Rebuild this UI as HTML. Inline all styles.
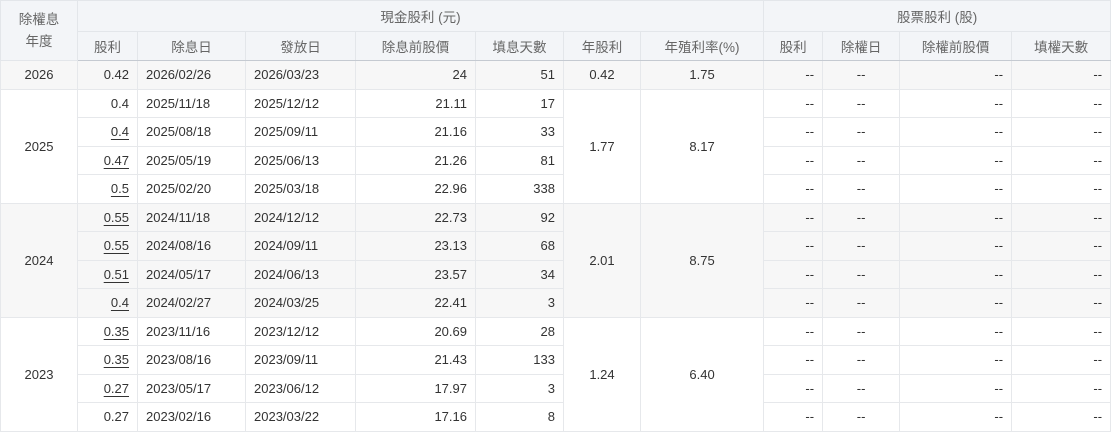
<!DOCTYPE html><html><head><meta charset="utf-8"><style>
body{margin:0;background:#fff;font-family:"Liberation Sans","Noto Sans CJK TC",sans-serif;font-size:13px;color:#333}
table{border-collapse:collapse;table-layout:fixed;width:1110px}
th{background:#f3f5f8;color:#666;font-weight:normal;border:1px solid #e3e6ea;text-align:center;font-size:13.5px;padding:0}
tr.h1 th{height:30px}
tr.h2 th{height:28px;border-bottom:1px solid #c5cad1}
td{border:1px solid #e6e8eb;height:27.5px;padding:0 8px;white-space:nowrap;box-sizing:border-box}
tr.d{height:28.5px}
.r{text-align:right}.l{text-align:left}.c{text-align:center}
.g td{background:#f7f7f7}
u{text-decoration:underline;text-underline-offset:3px}
</style></head><body>
<table>
<colgroup><col style="width:77px"><col style="width:60px"><col style="width:108px"><col style="width:110px"><col style="width:120px"><col style="width:88px"><col style="width:77px"><col style="width:123px"><col style="width:59px"><col style="width:77px"><col style="width:112px"><col style="width:99px"></colgroup>
<tr class="h1"><th rowspan="2" class="c" style="line-height:22px">除權息<br>年度</th><th colspan="7">現金股利 (元)</th><th colspan="4">股票股利 (股)</th></tr>
<tr class="h2"><th>股利</th><th>除息日</th><th>發放日</th><th>除息前股價</th><th>填息天數</th><th>年股利</th><th>年殖利率(%)</th><th>股利</th><th>除權日</th><th>除權前股價</th><th>填權天數</th></tr>
<tr class="g d"><td class="c">2026</td><td class="r">0.42</td><td>2026/02/26</td><td>2026/03/23</td><td class="r">24</td><td class="r">51</td><td class="c">0.42</td><td class="c">1.75</td><td class="r">--</td><td class="c">--</td><td class="r">--</td><td class="r">--</td></tr>
<tr class="d"><td class="c" rowspan="4">2025</td><td class="r">0.4</td><td>2025/11/18</td><td>2025/12/12</td><td class="r">21.11</td><td class="r">17</td><td class="c" rowspan="4">1.77</td><td class="c" rowspan="4">8.17</td><td class="r">--</td><td class="c">--</td><td class="r">--</td><td class="r">--</td></tr>
<tr class="d"><td class="r"><u>0.4</u></td><td>2025/08/18</td><td>2025/09/11</td><td class="r">21.16</td><td class="r">33</td><td class="r">--</td><td class="c">--</td><td class="r">--</td><td class="r">--</td></tr>
<tr class="d"><td class="r"><u>0.47</u></td><td>2025/05/19</td><td>2025/06/13</td><td class="r">21.26</td><td class="r">81</td><td class="r">--</td><td class="c">--</td><td class="r">--</td><td class="r">--</td></tr>
<tr class="d"><td class="r"><u>0.5</u></td><td>2025/02/20</td><td>2025/03/18</td><td class="r">22.96</td><td class="r">338</td><td class="r">--</td><td class="c">--</td><td class="r">--</td><td class="r">--</td></tr>
<tr class="g d"><td class="c" rowspan="4">2024</td><td class="r"><u>0.55</u></td><td>2024/11/18</td><td>2024/12/12</td><td class="r">22.73</td><td class="r">92</td><td class="c" rowspan="4">2.01</td><td class="c" rowspan="4">8.75</td><td class="r">--</td><td class="c">--</td><td class="r">--</td><td class="r">--</td></tr>
<tr class="g d"><td class="r"><u>0.55</u></td><td>2024/08/16</td><td>2024/09/11</td><td class="r">23.13</td><td class="r">68</td><td class="r">--</td><td class="c">--</td><td class="r">--</td><td class="r">--</td></tr>
<tr class="g d"><td class="r"><u>0.51</u></td><td>2024/05/17</td><td>2024/06/13</td><td class="r">23.57</td><td class="r">34</td><td class="r">--</td><td class="c">--</td><td class="r">--</td><td class="r">--</td></tr>
<tr class="g d"><td class="r"><u>0.4</u></td><td>2024/02/27</td><td>2024/03/25</td><td class="r">22.41</td><td class="r">3</td><td class="r">--</td><td class="c">--</td><td class="r">--</td><td class="r">--</td></tr>
<tr class="d"><td class="c" rowspan="4">2023</td><td class="r"><u>0.35</u></td><td>2023/11/16</td><td>2023/12/12</td><td class="r">20.69</td><td class="r">28</td><td class="c" rowspan="4">1.24</td><td class="c" rowspan="4">6.40</td><td class="r">--</td><td class="c">--</td><td class="r">--</td><td class="r">--</td></tr>
<tr class="d"><td class="r"><u>0.35</u></td><td>2023/08/16</td><td>2023/09/11</td><td class="r">21.43</td><td class="r">133</td><td class="r">--</td><td class="c">--</td><td class="r">--</td><td class="r">--</td></tr>
<tr class="d"><td class="r"><u>0.27</u></td><td>2023/05/17</td><td>2023/06/12</td><td class="r">17.97</td><td class="r">3</td><td class="r">--</td><td class="c">--</td><td class="r">--</td><td class="r">--</td></tr>
<tr class="d"><td class="r">0.27</td><td>2023/02/16</td><td>2023/03/22</td><td class="r">17.16</td><td class="r">8</td><td class="r">--</td><td class="c">--</td><td class="r">--</td><td class="r">--</td></tr>
</table></body></html>
